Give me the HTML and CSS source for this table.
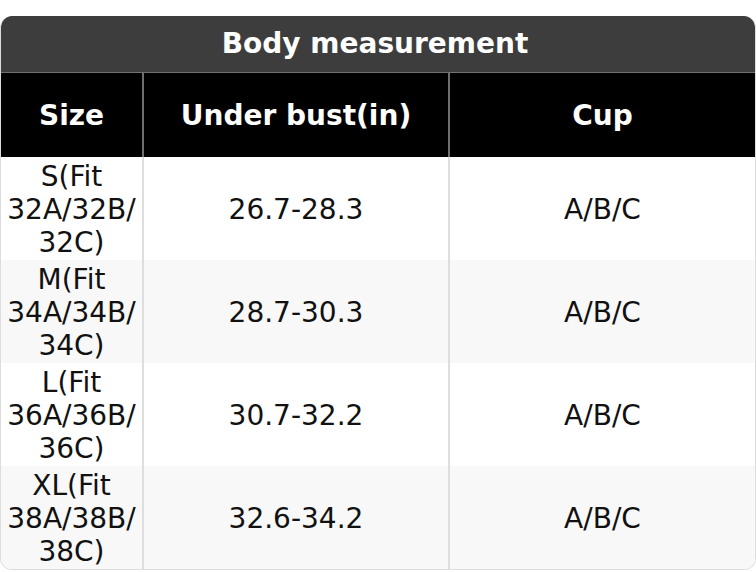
FILE: index.html
```html
<!DOCTYPE html>
<html>
<head>
<meta charset="utf-8">
<link rel="stylesheet" href="styles.css">
</head>
<body>
<div class="wrap">
  <table class="size-table">
    <colgroup>
      <col class="c1">
      <col class="c2">
      <col class="c3">
    </colgroup>
    <thead>
      <tr><th class="title" colspan="3">Body measurement</th></tr>
      <tr class="head">
        <th>Size</th>
        <th>Under bust(in)</th>
        <th>Cup</th>
      </tr>
    </thead>
    <tbody>
      <tr>
        <td>S(Fit 32A/32B/ 32C)</td>
        <td>26.7-28.3</td>
        <td>A/B/C</td>
      </tr>
      <tr>
        <td>M(Fit 34A/34B/ 34C)</td>
        <td>28.7-30.3</td>
        <td>A/B/C</td>
      </tr>
      <tr>
        <td>L(Fit 36A/36B/ 36C)</td>
        <td>30.7-32.2</td>
        <td>A/B/C</td>
      </tr>
      <tr>
        <td>XL(Fit 38A/38B/ 38C)</td>
        <td>32.6-34.2</td>
        <td>A/B/C</td>
      </tr>
    </tbody>
  </table>
</div>
</body>
</html>
```

FILE: styles.css
```css
html, body {
  margin: 0;
  padding: 0;
  background: #ffffff;
}

.wrap {
  padding-top: 16px;
}

.size-table {
  width: 756px;
  table-layout: fixed;
  border-collapse: separate;
  border-spacing: 0;
  border-radius: 12px;
  overflow: hidden;
  border: 1px solid #dcdcdc;
  border-top: none;
  font-family: "DejaVu Sans", sans-serif;
  font-size: 28px;
  line-height: 33px;
  color: #111111;
}

.c1 { width: 141px; }
.c2 { width: 306px; }
.c3 { width: 307px; }

.title {
  background: #3d3d3d;
  color: #ffffff;
  font-weight: bold;
  text-align: center;
  padding: 11px 6px 12px 0;
  border-bottom: 1px solid #707070;
}

.head th {
  background: #000000;
  color: #ffffff;
  font-weight: bold;
  text-align: center;
  height: 84px;
  padding: 0;
  box-sizing: border-box;
}

.head th + th {
  border-left: 2px solid #6e6e6e;
}

.size-table td {
  text-align: center;
  padding: 2px 6px 1px;
  height: 103px;
  box-sizing: border-box;
  word-wrap: break-word;
}

.size-table td + td {
  border-left: 2px solid #dedede;
}

.size-table tbody tr:nth-child(even) td {
  background: #f8f8f8;
}
```
